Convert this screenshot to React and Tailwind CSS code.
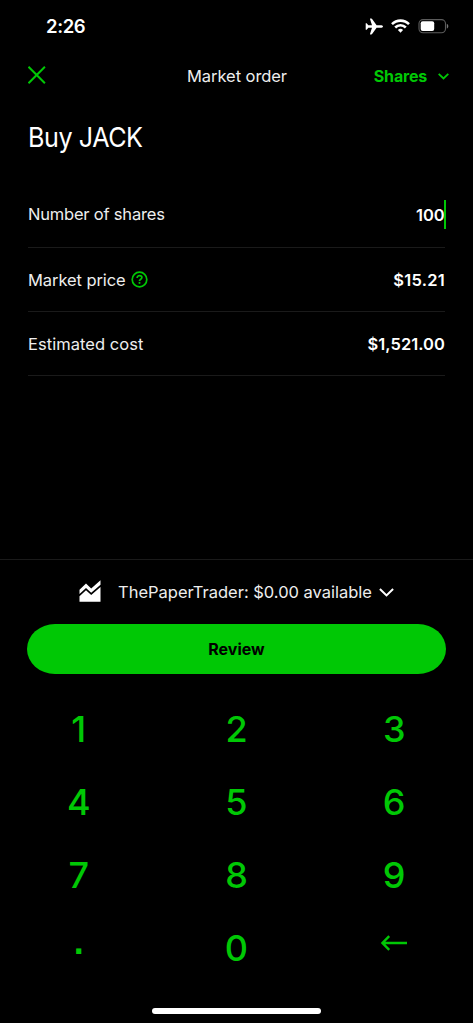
const KEYS = ['1', '2', '3', '4', '5', '6', '7', '8', '9', '.', '0'];

function StatusBar() {
  return (
    <div className="flex h-[52px] items-center justify-between pl-[46px] pr-[24px]">
      <span className="text-[18.5px] leading-none font-semibold tracking-[-0.4px]">2:26</span>
      <div className="flex items-center">
        <svg className="h-[17px] w-[19px]" viewBox="0 0 19 17" fill="currentColor">
          <path d="M18 8.500c0-.8-1.200-1.300-2.500-1.300h-3.900L7.300 1.200C7 .8 6.700.6 6.200.6H5.300c-.3 0-.4.2-.3.500l2 6.100-3.700.1L1.900 5.500c-.1-.1-.3-.2-.5-.2H1c-.2 0-.3.1-.3.300v5.800c0 .2.100.3.300.3h.400c.2 0 .4-.1.500-.2l1.400-1.800 3.700.1-2 6.100c-.1.300 0 .500.300.500h.900c.5 0 .8-.2 1.100-.6l4.300-6h3.900c1.300 0 2.500-.5 2.500-1.300z" />
        </svg>
        <svg className="ml-[7px] h-[14px] w-[19px]" viewBox="0 0 19 14" fill="none" stroke="currentColor" strokeWidth="2.6">
          <path d="M1 5.100a12.100 12.100 0 0 1 17 0" />
          <path d="M4.200 8.500a7.500 7.500 0 0 1 10.600 0" />
          <path d="M9.500 13.800l-2.600-2.700a3.700 3.700 0 0 1 5.200 0z" fill="currentColor" stroke="none" />
        </svg>
        <svg className="ml-[8px] h-[15px] w-[31px]" viewBox="0 0 31 15" fill="none">
          <rect x="1" y=".6" width="26.500" height="13.200" rx="4" stroke="#5c5c5c" strokeWidth="1.100" />
          <rect x="2.700" y="2.300" width="13.500" height="9.800" rx="2" fill="white" />
          <path d="M28.800 4.800c2 .8 2 4 0 4.800z" fill="#777" />
        </svg>
      </div>
    </div>
  );
}

function Header() {
  return (
    <header className="grid h-[48px] grid-cols-[1fr_auto_1fr] items-center pl-[28px] pr-[24px]">
      <svg className="mb-[2px] h-[18px] w-[18px] text-[#00c805]" viewBox="0 0 18 18" fill="none" stroke="currentColor" strokeWidth="2">
        <path d="M.5.8l16.400 16.400M16.900.8L.5 17.200" />
      </svg>
      <span className="mr-[3px] text-[16.5px] tracking-[-0.06px] text-[#eee]">Market order</span>
      <div className="flex items-center justify-end text-[#00c805]">
        <span className="text-[16px] font-bold tracking-[-0.2px]">Shares</span>
        <svg className="ml-[11px] h-[7px] w-[11px]" viewBox="0 0 11 7" fill="none" stroke="currentColor" strokeWidth="1.800">
          <path d="M.7.8l4.800 4.700L10.300.8" />
        </svg>
      </div>
    </header>
  );
}

function Row({ label, children, className }) {
  return (
    <div className={`flex items-center justify-between border-b border-[#1a1a1a] ${className}`}>
      <div className="flex items-center gap-[6px] text-[16.5px] text-[#eee]">{label}</div>
      <div className="flex items-center text-[16.5px] font-semibold">{children}</div>
    </div>
  );
}

export default function App() {
  return (
    <main className="flex h-[1023px] w-[473px] flex-col overflow-hidden bg-black font-['Inter',sans-serif] text-white">
      <StatusBar />
      <Header />
      <section className="flex h-[459px] flex-col px-[28px]">
        <h1 className="mt-[18px] h-[38px] origin-left scale-x-[0.915] text-[27.5px] leading-[38px] tracking-[-0.5px]">Buy JACK</h1>
        <Row label={<span className="tracking-[-0.2px]">Number of shares</span>} className="mt-[26px] h-[66px]">
          <span className="pt-[2px]">100</span>
          <span className="-mr-[0.7px] -ml-px h-[29px] w-[2px] bg-[#00c805]" />
        </Row>
        <Row
          className="h-[64px]"
          label={
            <>
              <span className="pt-[2px] tracking-[-0.08px]">Market price</span>
              <svg className="-ml-px h-[17px] w-[17px] text-[#00c805]" viewBox="0 0 17 17" fill="none" stroke="currentColor" strokeWidth="1.700">
                <circle cx="8.500" cy="8.500" r="7.300" />
                <path d="M6.100 7c0-1.500 1-2.300 2.400-2.300s2.400.8 2.400 1.900c0 1.700-2.400 1.500-2.400 3.400" />
                <path d="M8.500 10.900v1.900" />
              </svg>
            </>
          }
        >
          <span className="pt-[2px] tracking-[0.25px]">$15.21</span>
        </Row>
        <Row label={<span className="pt-[2px] tracking-[0.05px]">Estimated cost</span>} className="h-[64px]">
          <span className="pt-[2px] tracking-[0.05px]">$1,521.00</span>
        </Row>
      </section>
      <section className="flex flex-col border-t border-[#1a1a1a]">
        <div className="flex h-[64px] items-center justify-center">
          <svg className="mb-[2px] h-[22px] w-[22px]" viewBox="0 0 22 22" fill="currentColor">
            <path d="M.5 9.800L7 3.600l5.200 5L21.500.2v4.600l-9.300 8L7 8.100.5 14z" />
            <path d="M.5 16.200L7 10.200l5.200 4.900L21.500 7v14.700H.5z" />
          </svg>
          <span className="ml-[17px] text-[16.5px] tracking-[-0.01px] text-[#eee]">ThePaperTrader: $0.00 available</span>
          <svg className="ml-[7px] h-[9px] w-[15px]" viewBox="0 0 15 9" fill="none" stroke="currentColor" strokeWidth="2">
            <path d="M.9 1l6.600 6.400L14.100 1" />
          </svg>
        </div>
        <button className="mx-[27px] h-[50px] rounded-[28px/25px] bg-[#00c805] text-[16px] font-bold text-black">Review</button>
        <div className="mt-[18px] grid grid-cols-3 text-[#00c805]">
          {KEYS.map((key) => (
            <button
              key={key}
              className={
                key === '.'
                  ? "flex h-[73px] items-center justify-center pb-[11px] font-['Liberation_Sans',sans-serif] text-[36px] leading-none font-bold"
                  : 'flex h-[73px] items-center justify-center text-[36px] leading-none font-medium'
              }
            >
              {key}
            </button>
          ))}
          <button className="flex h-[73px] items-center justify-center">
            <svg className="mb-[10px] h-[16px] w-[26px]" viewBox="0 0 26 16" fill="none" stroke="currentColor" strokeWidth="2.400">
              <path d="M1.500 8H26M8.200 1.200L1.500 8l6.700 6.800" />
            </svg>
          </button>
        </div>
        <div className="mt-[24px] h-[6px] w-[169px] self-center rounded-full bg-white" />
      </section>
    </main>
  );
}
